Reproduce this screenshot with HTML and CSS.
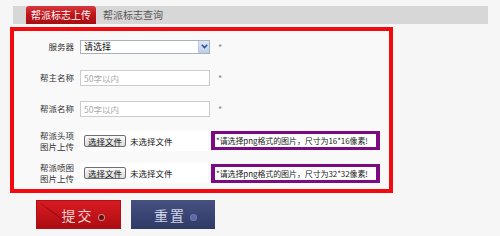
FILE: index.html
```html
<!DOCTYPE html>
<html lang="zh-CN">
<head>
<meta charset="utf-8">
<title>帮派标志上传</title>
<link rel="stylesheet" href="styles.css">
</head>
<body>
<div class="tabs">
  <div class="tab active">帮派标志上传</div>
  <div class="tab">帮派标志查询</div>
</div>
<div class="panel">
  <div class="row r31">
    <div class="label">服务器</div>
    <div class="select"><span class="sel-text">请选择</span><span class="sel-btn"><svg width="7" height="5" viewBox="0 0 7 5"><path d="M0.8 0.8 L3.5 3.6 L6.2 0.8" fill="none" stroke="#2a4f95" stroke-width="1.5"/></svg></span></div>
    <div class="star">*</div>
  </div>
  <div class="row r31">
    <div class="label">帮主名称</div>
    <input class="text" type="text" placeholder="50字以内">
    <div class="star">*</div>
  </div>
  <div class="row r31">
    <div class="label">帮派名称</div>
    <input class="text" type="text" placeholder="50字以内">
    <div class="star">*</div>
  </div>
  <div class="row r33">
    <div class="label two">帮派头项<br>图片上传</div>
    <div class="file"><span class="file-btn">选择文件</span><span class="file-name">未选择文件</span></div>
    <div class="hint">*请选择png格式的图片，尺寸为16*16像素!</div>
  </div>
  <div class="row r32">
    <div class="label two">帮派喷图<br>图片上传</div>
    <div class="file"><span class="file-btn">选择文件</span><span class="file-name">未选择文件</span></div>
    <div class="hint">*请选择png格式的图片，尺寸为32*32像素!</div>
  </div>
</div>
<div class="actions">
  <div class="btn submit"><span class="streak s1"></span><span class="streak s2"></span><span class="btn-text">提交</span><span class="dot"></span></div>
  <div class="btn reset"><span class="btn-text">重置</span><span class="dot blue"></span></div>
</div>
</body>
</html>
```

FILE: styles.css
```css
* { box-sizing: border-box; }
body {
  margin: 0;
  background: #f6f6f6;
  font-family: "Noto Sans CJK SC", "Liberation Sans", sans-serif;
  color: #333;
}
.tabs {
  margin: 6px 12px 0 13px;
  height: 18px;
  background: #d7d7d7;
  display: flex;
  align-items: stretch;
  padding-left: 13px;
}
.tab {
  font-size: 10px;
  line-height: 18px;
  color: #555;
  padding: 0 6px;
}
.tab.active {
  width: 70px;
  padding: 0;
  text-align: center;
  color: #fff;
  background: linear-gradient(#d83a3e 0%, #c0161c 45%, #a70d12 100%);
  border-radius: 3px 3px 0 0;
  margin-right: 1px;
}
.panel {
  margin: 3px 0 0 10px;
  width: 383px;
  border: 4px solid #f20a0f;
  background: #f9f9f9;
  display: flex;
  flex-direction: column;
}
.row {
  display: flex;
  align-items: center;
}
.r31 { height: 31px; }
.r33 { height: 33px; }
.r32 { height: 32px; }
.label {
  width: 60px;
  margin-right: 6px;
  text-align: right;
  font-size: 8.5px;
  line-height: 11px;
  color: #333;
}
.label.two { text-align: left; padding-left: 26px; line-height: 11px; }
.select {
  width: 130px;
  height: 14px;
  border: 1px solid #a9b1bd;
  background: #fff;
  display: flex;
  align-items: center;
  justify-content: space-between;
  padding-left: 3px;
}
.sel-text { font-size: 9px; color: #111; line-height: 12px; }
.sel-btn {
  width: 11px;
  height: 12px;
  background: linear-gradient(#dde7f6, #bccde9);
  border-left: 1px solid #b9c6dc;
  display: flex;
  align-items: center;
  justify-content: center;
}
.star {
  margin-left: 8px;
  font-size: 9px;
  color: #888;
  line-height: 9px;
  padding-top: 2px;
}
.text {
  width: 130px;
  height: 16px;
  border: 1px solid #cccccc;
  background: #fff;
  margin: 0;
  padding: 0 3px;
  font-family: "Noto Sans CJK SC", "Liberation Sans", sans-serif;
  font-size: 8.5px;
  color: #333;
  outline: none;
}
.text::placeholder { color: #aaa; }
.file {
  width: 128px;
  height: 20px;
  background: #fff;
  display: flex;
  align-items: center;
  padding-left: 4px;
  gap: 4px;
}
.file-btn {
  height: 12px;
  width: 42px;
  border: 1px solid #6e6e6e;
  border-radius: 2px;
  background: linear-gradient(#fafafa, #dcdcdc);
  font-size: 8.5px;
  line-height: 10px;
  text-align: center;
  color: #111;
}
.file-name { font-size: 8.5px; color: #111; line-height: 12px; }
.hint {
  margin-left: 3px;
  width: 169px;
  height: 19px;
  border: 3px solid #7c0a82;
  border-left-width: 4px;
  border-right-width: 4px;
  background: #fff;
  font-size: 8px;
  line-height: 13px;
  color: #222;
  padding-left: 1px;
  white-space: nowrap;
  overflow: hidden;
  letter-spacing: -0.1px;
}
.actions {
  margin: 7px 0 0 36px;
  display: flex;
  gap: 10px;
}
.btn {
  position: relative;
  width: 85px;
  height: 29px;
  display: flex;
  align-items: center;
  justify-content: center;
  gap: 5px;
  overflow: hidden;
}
.btn.submit {
  background: linear-gradient(#d81c22 0%, #c4141a 50%, #a80c10 100%);
  box-shadow: inset 0 0 0 1px #b01015;
}
.btn.reset {
  width: 84px;
  background: linear-gradient(#46517f 0%, #3a4574 50%, #2f3a66 100%);
}
.btn-text {
  font-size: 14px;
  letter-spacing: 2px;
  color: #f0d4d4;
  font-weight: 400;
  padding-left: 8px;
}
.reset .btn-text { color: #cfd4e6; padding-left: 4px; }
.dot {
  width: 5px;
  height: 5px;
  border-radius: 50%;
  background: #6a0a0d;
  box-shadow: 0 0 0 1px #c88;
  margin-top: 5px;
}
.dot.blue { background: #5d6aa3; box-shadow: 0 0 0 1px #6f7bb0; }
.streak {
  position: absolute;
  left: 2px;
  width: 30px;
  height: 1px;
  background: #8a0a0e;
  transform: rotate(36deg);
  opacity: 0.55;
}
.s1 { top: 12px; }
.s2 { top: 16px; left: 8px; opacity: 0.4; }
```
